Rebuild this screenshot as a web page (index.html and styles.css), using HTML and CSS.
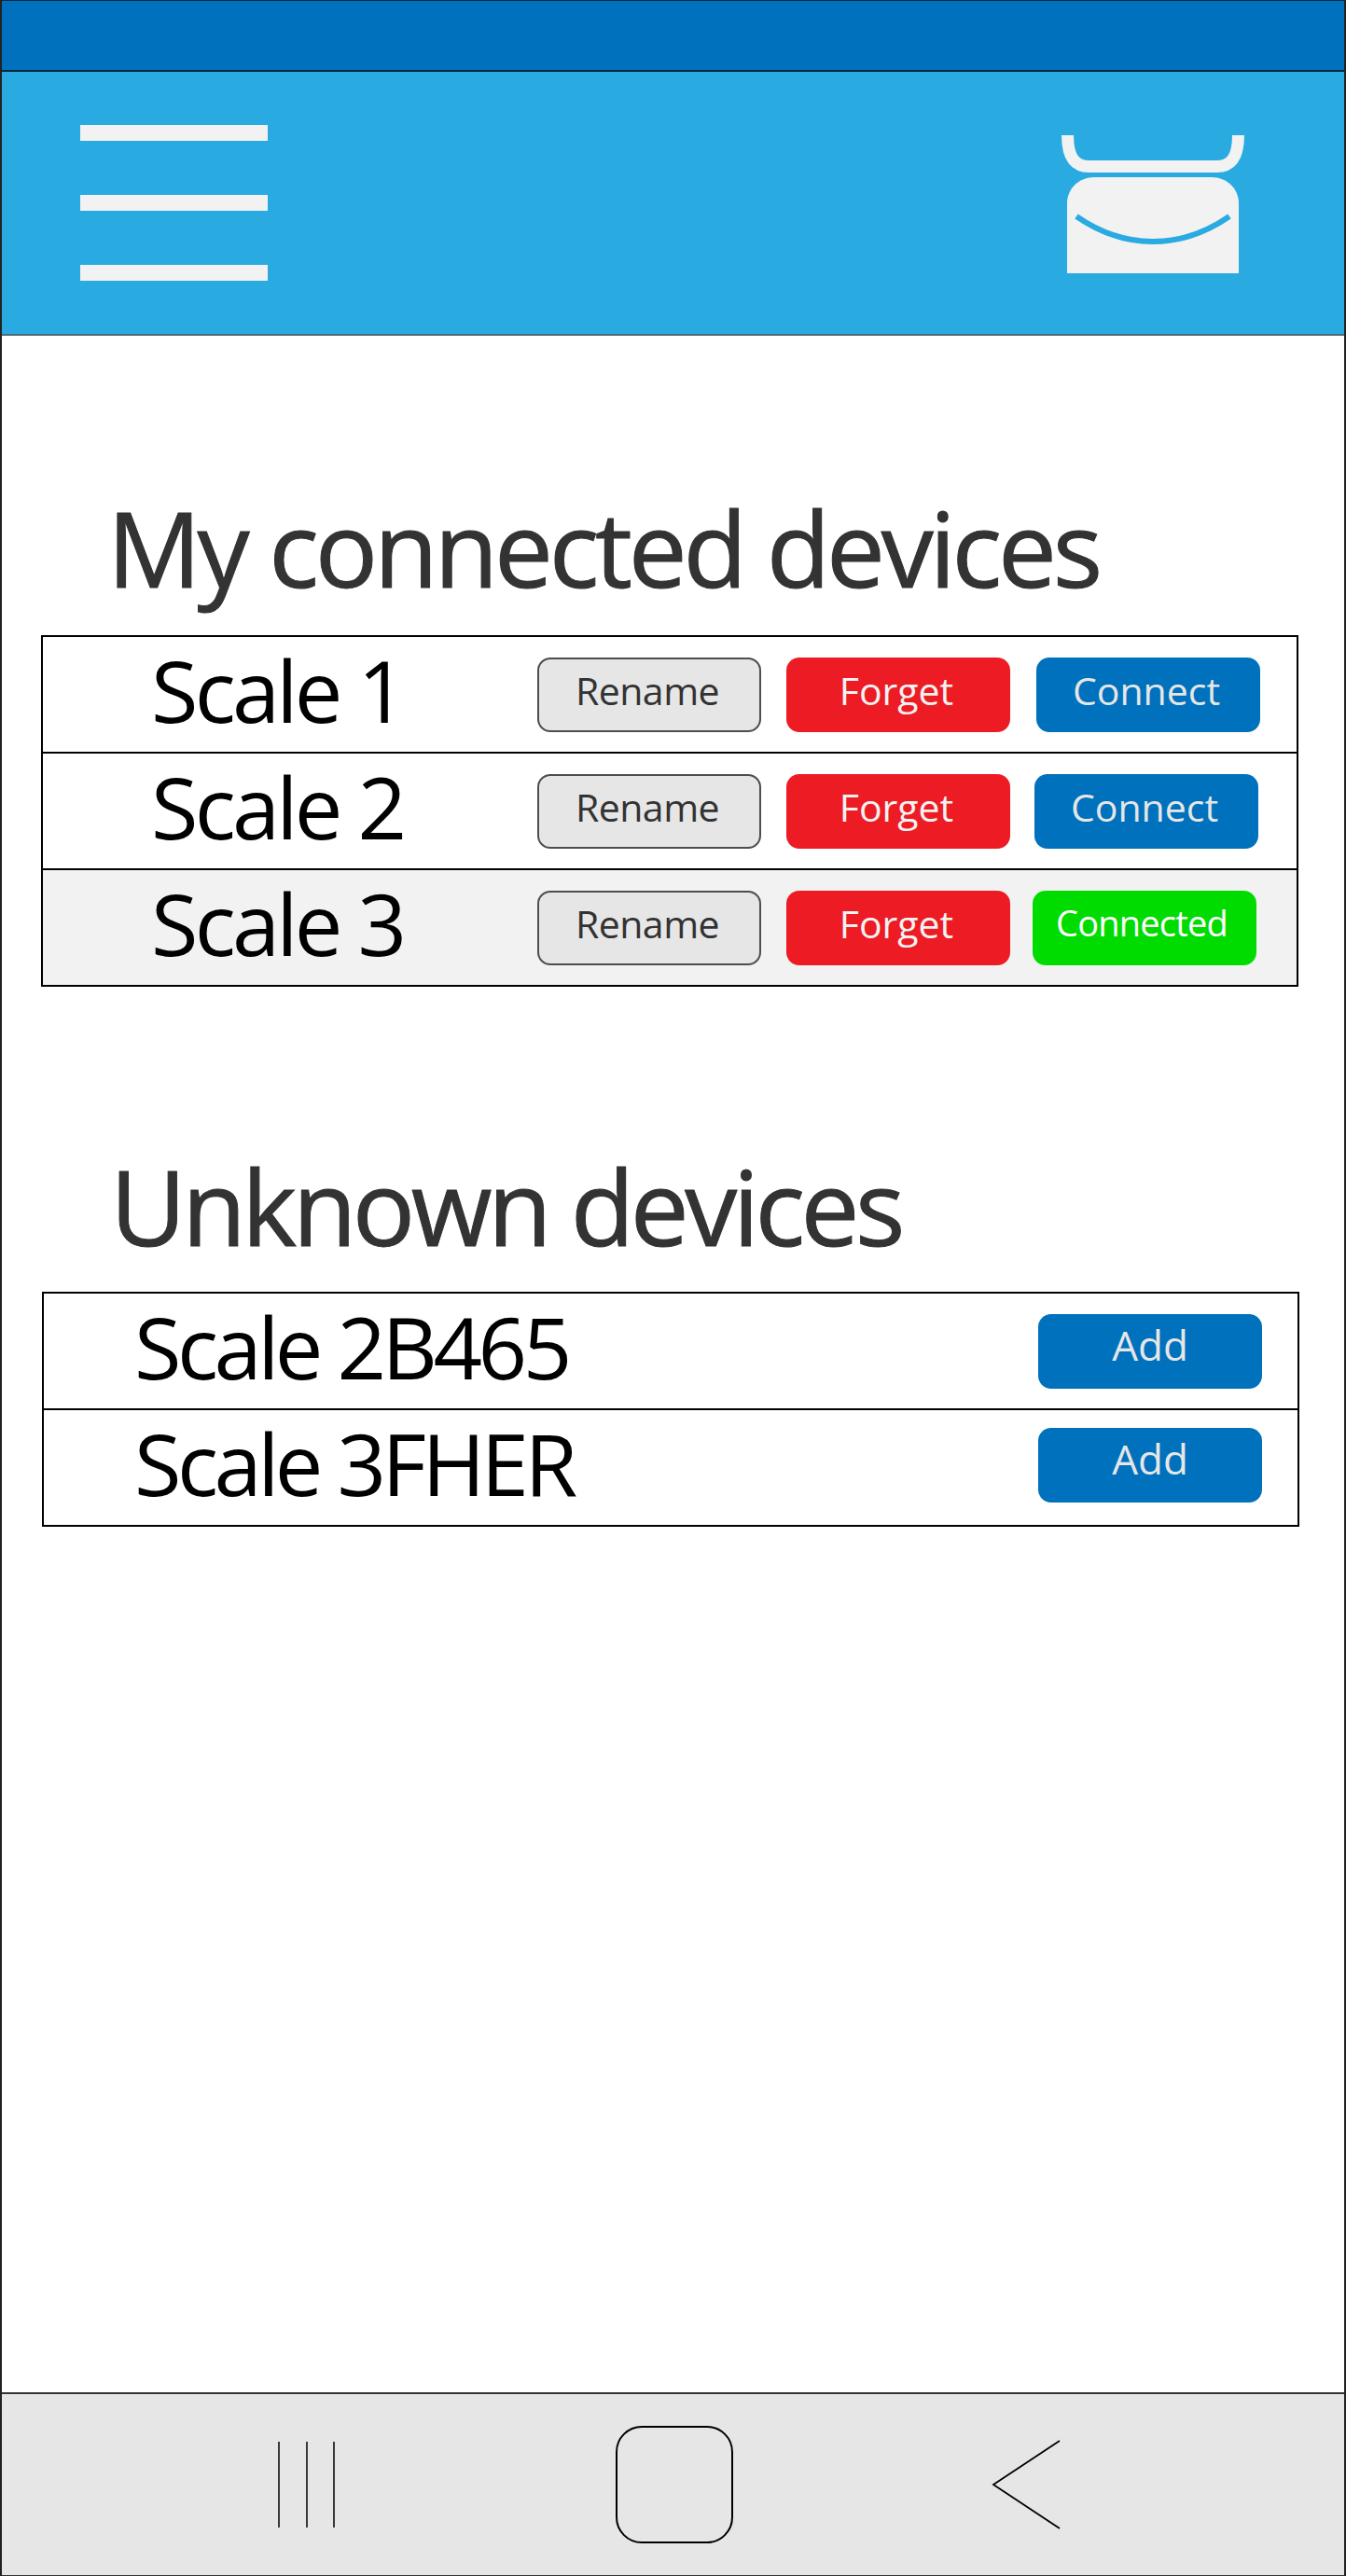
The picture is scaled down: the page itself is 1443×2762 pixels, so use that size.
FILE: index.html
```html
<!DOCTYPE html>
<html lang="en">
<head>
    <meta charset="UTF-8">
    <meta name="viewport" content="width=device-width, initial-scale=1.0">
    <title>Devices</title>
    <link rel="stylesheet" href="styles.css">
</head>
<body>
<div class="phone">
    <div class="status-bar"></div>

    <header class="app-bar">
        <div class="burger">
            <span></span>
            <span></span>
            <span></span>
        </div>
        <svg class="scale-icon" width="196" height="148" viewBox="0 0 196 148">
            <path d="M6.500 0 C6.500 22 13 33.500 30 33.500 H166 C183 33.500 189.500 22 189.500 0" fill="none" stroke="#f2f2f2" stroke-width="13"/>
            <path d="M6 148 V73 C6 57 19 45 35 45 H161 C177 45 190 57 190 73 V148 Z" fill="#f2f2f2"/>
            <path d="M16 87 C68 123 128 123 180 87" fill="none" stroke="#29abe2" stroke-width="6"/>
        </svg>
    </header>

    <main class="content">
        <h1 class="section-title title-connected">My connected devices</h1>
        <div class="device-list list-connected">
            <div class="device-row">
                <span class="device-name">Scale 1</span>
                <button class="btn btn-rename">Rename</button>
                <button class="btn btn-forget">Forget</button>
                <button class="btn btn-connect">Connect</button>
            </div>
            <div class="device-row">
                <span class="device-name">Scale 2</span>
                <button class="btn btn-rename">Rename</button>
                <button class="btn btn-forget">Forget</button>
                <button class="btn btn-connect second">Connect</button>
            </div>
            <div class="device-row active">
                <span class="device-name">Scale 3</span>
                <button class="btn btn-rename">Rename</button>
                <button class="btn btn-forget">Forget</button>
                <button class="btn btn-connected">Connected</button>
            </div>
        </div>

        <h1 class="section-title title-unknown">Unknown devices</h1>
        <div class="device-list list-unknown">
            <div class="device-row">
                <span class="device-name">Scale 2B465</span>
                <button class="btn btn-add">Add</button>
            </div>
            <div class="device-row">
                <span class="device-name">Scale 3FHER</span>
                <button class="btn btn-add second">Add</button>
            </div>
        </div>
    </main>

    <footer class="nav-bar">
        <svg class="nav-recent" width="62" height="92" viewBox="0 0 62 92">
            <path d="M1 0 V92 M31 0 V92 M60 0 V92" fill="none" stroke="#000" stroke-width="1.500"/>
        </svg>
        <div class="nav-home"></div>
        <svg class="nav-back" width="74" height="96" viewBox="0 0 74 96">
            <path d="M73 1 L2 48 L73 95" fill="none" stroke="#000" stroke-width="1.800"/>
        </svg>
    </footer>
</div>
</body>
</html>
```

FILE: styles.css
```css
body {
    margin: 0;
    font-family: "Open Sans", "Noto Sans", sans-serif;
    background-color: #fff;
}
.phone {
    width: 1443px;
    height: 2762px;
    box-sizing: border-box;
    border-left: 2px solid #222;
    border-right: 2px solid #222;
    display: flex;
    flex-direction: column;
}
.status-bar {
    height: 74px;
    background-color: #0071bc;
    border-top: 1px solid #04263d;
    border-bottom: 2px solid #04263d;
}
.app-bar {
    height: 283px;
    box-sizing: border-box;
    background-color: #29abe2;
    border-bottom: 2px solid #4a6b7a;
    padding: 57px 107px 0 84px;
    display: flex;
    justify-content: space-between;
    align-items: flex-start;
}
.burger {
    width: 201px;
    display: flex;
    flex-direction: column;
    gap: 58px;
}
.burger span {
    height: 17px;
    background-color: #f2f2f2;
}
.scale-icon {
    margin-top: 11px;
}
.content {
    flex: 1;
}
.section-title {
    margin: 0;
    height: 130px;
    line-height: 130px;
    font-size: 112px;
    font-weight: 400;
    color: #333;
    letter-spacing: -4.200px;
    white-space: nowrap;
    -webkit-text-stroke: 1px #333;
}
.title-connected {
    margin: 162px 0 29px 113px;
}
.title-unknown {
    margin: 0 0 27px 116px;
    letter-spacing: -4.500px;
}
.device-list {
    width: 1348px;
    box-sizing: border-box;
    border: 2px solid #000;
    margin-left: 42px;
    margin-bottom: 170px;
}
.list-unknown {
    margin-left: 43px;
}
.device-row {
    height: 123px;
    display: flex;
    align-items: center;
    padding-left: 120px;
    border-top: 2px solid #000;
}
.device-row:first-child {
    border-top: none;
}
.device-row.active {
    background-color: #f2f2f2;
}
.device-name {
    width: 410px;
    flex-shrink: 0;
    margin-left: -4px;
    margin-right: 4px;
    padding-bottom: 10px;
    font-size: 92px;
    line-height: 113px;
    color: #000;
    letter-spacing: -3.800px;
    white-space: nowrap;
}
.btn {
    width: 240px;
    height: 80px;
    box-sizing: border-box;
    border: none;
    border-radius: 14px;
    padding: 0 4px 10px 0;
    font-family: "Open Sans", "Noto Sans", sans-serif;
    font-size: 41px;
    letter-spacing: 0;
    cursor: pointer;
}
.btn-rename {
    background-color: #e6e6e6;
    color: #333;
    border: 2px solid #4d4d4d;
    letter-spacing: -0.500px;
}
.btn-forget {
    background-color: #ed1c24;
    color: #f2f2f2;
    margin-left: 27px;
}
.btn-connect {
    background-color: #0071bc;
    color: #e6e6e6;
    margin-left: 28px;
}
.btn-connect.second {
    margin-left: 26px;
}
.btn-connected {
    background-color: #00dc00;
    color: #fff;
    margin-left: 24px;
    font-size: 38px;
    letter-spacing: -0.800px;
    padding: 0 6px 12px 0;
}
.list-unknown .device-row {
    padding-left: 101px;
}
.list-unknown .device-name {
    width: auto;
    letter-spacing: -4.500px;
}
.btn-add {
    background-color: #0071bc;
    color: #e6e6e6;
    margin-left: auto;
    margin-right: 38px;
    font-size: 44px;
    padding: 0 0 14px;
}
.btn-add.second {
    margin-bottom: 6px;
}
.nav-bar {
    height: 197px;
    box-sizing: border-box;
    background-color: #e6e6e6;
    border-top: 2px solid #333;
    border-bottom: 1px solid #333;
    display: flex;
    align-items: center;
    padding-left: 296px;
}
.nav-home {
    width: 126px;
    height: 126px;
    box-sizing: border-box;
    border: 2px solid #000;
    border-radius: 28px;
    margin-left: 300px;
}
.nav-back {
    margin-left: 277px;
}
```
